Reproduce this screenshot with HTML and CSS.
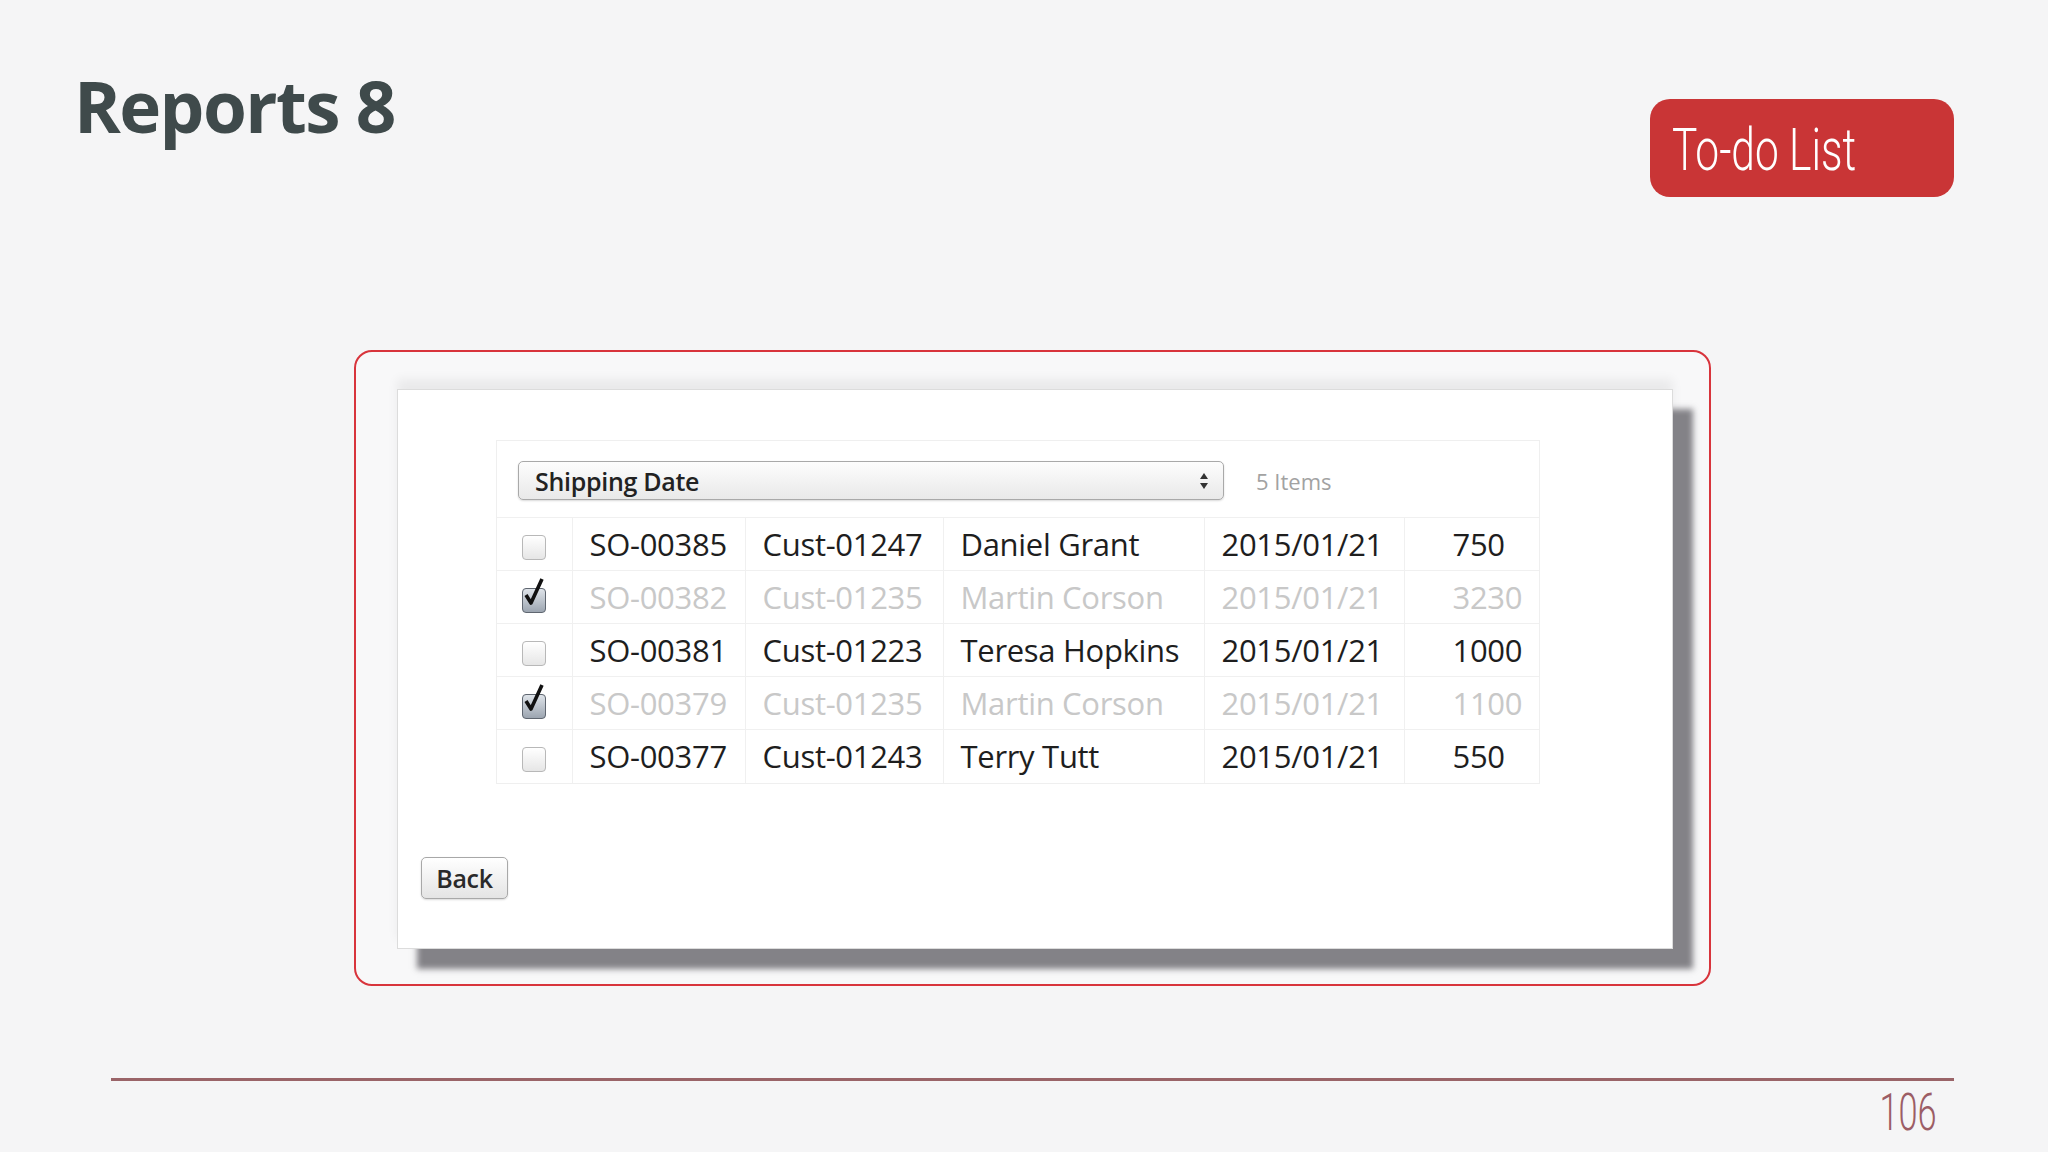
FILE: index.html
```html
<!DOCTYPE html>
<html lang="en">
<head>
    <meta charset="UTF-8">
    <meta name="viewport" content="width=device-width, initial-scale=1.0">
    <title>Reports 8</title>
    <link rel="stylesheet" href="styles.css">
</head>
<body>
    <div class="slide">
        <header class="top">
            <h1 class="title">Reports 8</h1>
            <div class="todo"><span class="todo-text">To-do List</span></div>
        </header>

        <div class="frame">
            <div class="card">
                <div class="panel">
                    <div class="panel-head">
                        <div class="select">
                            <span>Shipping Date</span>
                            <svg class="select-arrows" width="10" height="20" viewBox="0 0 10 20">
                                <path d="M5 2 L9 8 L1 8 Z" fill="#333"/>
                                <path d="M5 18 L9 12 L1 12 Z" fill="#333"/>
                            </svg>
                        </div>
                        <span class="count">5 Items</span>
                    </div>
                    <table class="orders">
                        <colgroup>
                            <col class="c-check">
                            <col class="c-so">
                            <col class="c-cust">
                            <col class="c-name">
                            <col class="c-date">
                            <col class="c-amt">
                        </colgroup>
                        <tr>
                            <td class="check"><span class="box"></span></td>
                            <td>SO-00385</td>
                            <td>Cust-01247</td>
                            <td>Daniel Grant</td>
                            <td>2015/01/21</td>
                            <td class="amt">750</td>
                        </tr>
                        <tr class="done">
                            <td class="check"><span class="box checked"><svg width="30" height="34" viewBox="0 0 30 34"><path d="M5 18 L10 26 L21 2" fill="none" stroke="#111" stroke-width="3.6" stroke-linejoin="round"/></svg></span></td>
                            <td>SO-00382</td>
                            <td>Cust-01235</td>
                            <td>Martin Corson</td>
                            <td>2015/01/21</td>
                            <td class="amt">3230</td>
                        </tr>
                        <tr>
                            <td class="check"><span class="box"></span></td>
                            <td>SO-00381</td>
                            <td>Cust-01223</td>
                            <td>Teresa Hopkins</td>
                            <td>2015/01/21</td>
                            <td class="amt">1000</td>
                        </tr>
                        <tr class="done">
                            <td class="check"><span class="box checked"><svg width="30" height="34" viewBox="0 0 30 34"><path d="M5 18 L10 26 L21 2" fill="none" stroke="#111" stroke-width="3.6" stroke-linejoin="round"/></svg></span></td>
                            <td>SO-00379</td>
                            <td>Cust-01235</td>
                            <td>Martin Corson</td>
                            <td>2015/01/21</td>
                            <td class="amt">1100</td>
                        </tr>
                        <tr>
                            <td class="check"><span class="box"></span></td>
                            <td>SO-00377</td>
                            <td>Cust-01243</td>
                            <td>Terry Tutt</td>
                            <td>2015/01/21</td>
                            <td class="amt">550</td>
                        </tr>
                    </table>
                </div>
                <button class="back">Back</button>
            </div>
        </div>

        <footer class="bottom">
            <div class="rule"></div>
            <div class="page-num"><span>106</span></div>
        </footer>
    </div>
</body>
</html>
```

FILE: styles.css
```css
body {
    margin: 0;
    background-color: #f5f5f6;
    font-family: "Open Sans", "Liberation Sans", sans-serif;
}

.slide {
    width: 2048px;
    height: 1152px;
    display: flex;
    flex-direction: column;
}

.top {
    display: flex;
    justify-content: space-between;
    align-items: flex-start;
    padding: 0 94px 0 74px;
    height: 197px;
}

.title {
    margin: 70px 0 0;
    font-size: 71px;
    line-height: 1;
    font-weight: 700;
    color: #3f4a4b;
    letter-spacing: -1.6px;
}

.todo {
    margin-top: 99px;
    width: 304px;
    height: 98px;
    box-sizing: border-box;
    padding: 3px 0 0 22px;
    background-color: #c93536;
    border-radius: 20px;
    display: flex;
    align-items: center;
}

.todo-text {
    display: inline-block;
    font-family: Roboto, "Liberation Sans", sans-serif;
    font-size: 59px;
    font-weight: 300;
    color: #fff;
    transform: scaleX(0.72);
    transform-origin: left center;
    white-space: nowrap;
}

.frame {
    margin: 153px 0 0 354px;
    width: 1357px;
    height: 636px;
    box-sizing: border-box;
    border: 2px solid #d8343c;
    border-radius: 18px;
    background-color: #f8f8f9;
    padding: 37px 0 0 41px;
}

.card {
    width: 1276px;
    height: 560px;
    box-sizing: border-box;
    background-color: #fff;
    border: 1px solid #dcdcdc;
    padding-top: 50px;
    display: flex;
    flex-direction: column;
    align-items: flex-start;
    box-shadow: 20px 20px 6px rgba(110, 109, 115, 0.85), 0 -10px 10px rgba(0, 0, 0, 0.06);
}

.panel {
    margin-left: 98px;
    width: 1042px;
    border: 1px solid #efefef;
}

.panel-head {
    display: flex;
    align-items: center;
    gap: 32px;
    padding: 20px 0 17px 21px;
}

.select {
    width: 706px;
    height: 39px;
    box-sizing: border-box;
    border: 1px solid #a9a9a9;
    border-radius: 5px;
    background: linear-gradient(#fdfdfd, #e9e9e9);
    box-shadow: 0 1px 2px rgba(0, 0, 0, 0.15);
    display: flex;
    align-items: center;
    justify-content: space-between;
    padding: 0 14px 0 16px;
    font-size: 25px;
    font-weight: 600;
    letter-spacing: -0.3px;
    color: #222;
}

.count {
    font-size: 22px;
    color: #a2a2a2;
}

.orders {
    width: 100%;
    border-collapse: collapse;
    table-layout: fixed;
    font-size: 31px;
    color: #1e1e1e;
}

.c-check { width: 75px; }
.c-so { width: 173px; }
.c-cust { width: 198px; }
.c-name { width: 261px; }
.c-date { width: 200px; }

.orders td {
    height: 53px;
    padding: 0 0 0 17px;
    border-top: 1px solid #f0f0f0;
    border-right: 1px solid #f0f0f0;
    white-space: nowrap;
    box-sizing: border-box;
    letter-spacing: -0.3px;
}

.orders td:last-child {
    border-right: none;
}

.orders td.check {
    padding: 0;
    text-align: center;
}

.orders td.amt {
    padding-left: 48px;
}

.orders tr.done td {
    color: #c8c8c8;
}

.box {
    display: inline-block;
    position: relative;
    width: 24px;
    height: 25px;
    box-sizing: border-box;
    border: 1px solid #b8b8b8;
    border-radius: 4px;
    background: linear-gradient(#ffffff, #e6e6e6);
    vertical-align: middle;
}

.box.checked {
    border-color: #5f6670;
    background: linear-gradient(#dfe4ea, #9ca5b0);
}

.box svg {
    position: absolute;
    left: -2px;
    top: -12px;
}

.back {
    margin: 73px 0 0 23px;
    width: 87px;
    height: 42px;
    border: 1px solid #a8a8a8;
    border-radius: 5px;
    background: linear-gradient(#ffffff, #e4e4e4);
    box-shadow: 0 1px 2px rgba(0, 0, 0, 0.15);
    font-family: "Open Sans", "Liberation Sans", sans-serif;
    font-size: 25px;
    font-weight: 600;
    letter-spacing: -0.3px;
    color: #2a2a2a;
    padding: 0;
}

.bottom {
    margin-top: 92px;
}

.rule {
    margin-left: 111px;
    width: 1843px;
    height: 3px;
    background-color: #9a6468;
}

.page-num {
    display: flex;
    justify-content: flex-end;
    padding-right: 111px;
    margin-top: 6px;
}

.page-num span {
    display: inline-block;
    font-family: Roboto, "Liberation Sans", sans-serif;
    font-size: 52px;
    font-weight: 300;
    line-height: 1;
    color: #9c5d65;
    transform: scaleX(0.66);
    transform-origin: right center;
}
```
